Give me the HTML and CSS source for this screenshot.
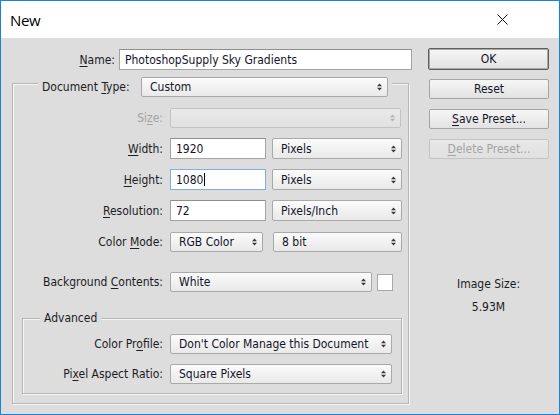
FILE: index.html
```html
<!DOCTYPE html>
<html>
<head>
<meta charset="utf-8">
<title>New</title>
<link rel="stylesheet" href="styles.css">
</head>
<body>
<div class="window">
  <header class="titlebar">
    <span class="title">New</span>
    <svg class="close" width="11" height="11" viewBox="0 0 11 11"><path d="M0.5 0.5L10.5 10.5M10.5 0.5L0.5 10.5" stroke="#111" stroke-width="1" fill="none"/></svg>
  </header>
  <div class="content">
    <div class="main">
      <div class="name-row">
        <span class="lbl name-lbl"><u>N</u>ame:</span>
        <div class="field name-field">PhotoshopSupply Sky Gradients</div>
      </div>
      <div class="group outer">
        <div class="group-head doc-head">
          <span class="lbl doc-lbl">Document <u>T</u>ype:</span>
          <div class="select doc-select"><span>Custom</span><svg class="arr" width="5" height="8" viewBox="0 0 5 8"><path d="M0 3.2L2.5 0.5L5 3.2ZM0 4.8L2.5 7.5L5 4.8Z"/></svg></div>
        </div>
        <div class="row row-size">
          <span class="lbl col-lbl disabled">Si<u>z</u>e:</span>
          <div class="select disabled w-size"><span></span><svg class="arr" width="5" height="8" viewBox="0 0 5 8"><path d="M0 3.2L2.5 0.5L5 3.2ZM0 4.8L2.5 7.5L5 4.8Z"/></svg></div>
        </div>
        <div class="row row-dim first-dim">
          <span class="lbl col-lbl"><u>W</u>idth:</span>
          <div class="field w-num">1920</div>
          <div class="select w-unit"><span>Pixels</span><svg class="arr" width="5" height="8" viewBox="0 0 5 8"><path d="M0 3.2L2.5 0.5L5 3.2ZM0 4.8L2.5 7.5L5 4.8Z"/></svg></div>
        </div>
        <div class="row row-dim">
          <span class="lbl col-lbl"><u>H</u>eight:</span>
          <div class="field w-num focus">1080<span class="caret"></span></div>
          <div class="select w-unit"><span>Pixels</span><svg class="arr" width="5" height="8" viewBox="0 0 5 8"><path d="M0 3.2L2.5 0.5L5 3.2ZM0 4.8L2.5 7.5L5 4.8Z"/></svg></div>
        </div>
        <div class="row row-dim">
          <span class="lbl col-lbl"><u>R</u>esolution:</span>
          <div class="field w-num">72</div>
          <div class="select w-unit"><span>Pixels/Inch</span><svg class="arr" width="5" height="8" viewBox="0 0 5 8"><path d="M0 3.2L2.5 0.5L5 3.2ZM0 4.8L2.5 7.5L5 4.8Z"/></svg></div>
        </div>
        <div class="row row-dim">
          <span class="lbl col-lbl">Color <u>M</u>ode:</span>
          <div class="select w-mode"><span>RGB Color</span><svg class="arr" width="5" height="8" viewBox="0 0 5 8"><path d="M0 3.2L2.5 0.5L5 3.2ZM0 4.8L2.5 7.5L5 4.8Z"/></svg></div>
          <div class="select w-bit"><span>8 bit</span><svg class="arr" width="5" height="8" viewBox="0 0 5 8"><path d="M0 3.2L2.5 0.5L5 3.2ZM0 4.8L2.5 7.5L5 4.8Z"/></svg></div>
        </div>
        <div class="row row-bg">
          <span class="lbl col-lbl">Background <u>C</u>ontents:</span>
          <div class="select w-bg"><span>White</span><svg class="arr" width="5" height="8" viewBox="0 0 5 8"><path d="M0 3.2L2.5 0.5L5 3.2ZM0 4.8L2.5 7.5L5 4.8Z"/></svg></div>
          <div class="swatch"></div>
        </div>
        <div class="group adv">
          <div class="group-head adv-head">Advanced</div>
          <div class="row row-cp">
            <span class="lbl adv-lbl">Color Pr<u>o</u>file:</span>
            <div class="select w-cp"><span>Don't Color Manage this Document</span><svg class="arr" width="5" height="8" viewBox="0 0 5 8"><path d="M0 3.2L2.5 0.5L5 3.2ZM0 4.8L2.5 7.5L5 4.8Z"/></svg></div>
          </div>
          <div class="row row-par">
            <span class="lbl adv-lbl">Pi<u>x</u>el Aspect Ratio:</span>
            <div class="select w-cp"><span>Square Pixels</span><svg class="arr" width="5" height="8" viewBox="0 0 5 8"><path d="M0 3.2L2.5 0.5L5 3.2ZM0 4.8L2.5 7.5L5 4.8Z"/></svg></div>
          </div>
        </div>
      </div>
    </div>
    <div class="side">
      <div class="btn btn-default">OK</div>
      <div class="btn btn-reset">Reset</div>
      <div class="btn"><span><u>S</u>ave Preset...</span></div>
      <div class="btn btn-disabled"><span><u>D</u>elete Preset...</span></div>
      <div class="img-size">
        <div class="img-lbl">Image Size:</div>
        <div class="img-val">5.93M</div>
      </div>
    </div>
  </div>
</div>
</body>
</html>
```

FILE: styles.css
```css
* { box-sizing: border-box; margin: 0; padding: 0; }
html, body { width: 560px; height: 415px; overflow: hidden; background: #fff; }
body {
  font-family: "DejaVu Sans Condensed", "DejaVu Sans", sans-serif;
  font-size: 12px;
  color: #1c1c24;
}
u { text-decoration: underline; text-underline-offset: 2px; text-decoration-thickness: 1px; }

.window {
  width: 560px;
  height: 415px;
  border: 1px solid #1883d7;
  display: flex;
  flex-direction: column;
  background: #dddddd;
}
.titlebar {
  height: 37px;
  flex: none;
  background: #fff;
  display: flex;
  align-items: center;
  padding-left: 9px;
}
.title {
  font-family: "Open Sans", "Noto Sans", sans-serif;
  font-size: 15px;
  letter-spacing: -0.4px;
  color: #000;
  margin-top: 1px;
}
.close { margin-left: auto; margin-right: 51px; }

.content {
  flex: 1;
  display: flex;
  padding: 10px 10px 0 11px;
}
.main { width: 400px; display: flex; flex-direction: column; }
.side { width: 121px; margin-left: 16px; display: flex; flex-direction: column; }

.lbl { white-space: nowrap; }
.lbl.disabled { color: #a3a3a3; }

.name-row { display: flex; align-items: center; height: 21px; margin-top: 1px; }
.name-lbl { width: 103px; text-align: right; margin-right: 4px; }
.name-field { width: 293px; }

.field {
  height: 21px;
  background: #fff;
  border: 1px solid #a4a4a4;
  border-top-color: #8e8e8e;
  display: flex;
  align-items: center;
  padding-left: 5px;
  color: #14142a;
}
.field.focus { border-color: #7eaee3; }
.caret { width: 1px; height: 13px; background: #000; margin-left: 1px; }

.select {
  height: 20px;
  border: 1px solid #a9a9a9;
  border-radius: 2px;
  background: linear-gradient(#fbfbfb, #e9e9e9);
  display: flex;
  align-items: center;
  padding: 0 5px 0 8px;
  color: #14142a;
  white-space: nowrap;
}
.select .arr { margin-left: auto; fill: #3a3a3a; flex: none; }
.select.disabled { background: linear-gradient(#e9e9e9, #e1e1e1); border-color: #c3c3c3; }
.select.disabled .arr { fill: #b3b3b3; }

.group {
  border: 1px solid #b6b6b6;
  box-shadow: inset 1px 1px 0 #f6f6f6, 1px 1px 0 #f6f6f6;
  display: flex;
  flex-direction: column;
}
.group-head {
  align-self: flex-start;
  display: flex;
  align-items: center;
  background: #dddddd;
  padding: 0 4px;
}
.outer { width: 397px; margin-top: 13px; padding-bottom: 0; }
.doc-head { margin-top: -7px; margin-left: 25px; height: 20px; }
.doc-lbl { width: 92px; }
.doc-select { width: 247px; margin-left: 7px; }

.row { display: flex; align-items: center; }
.col-lbl { width: 150px; text-align: right; margin-right: 7px; }
.adv-lbl { width: 140px; text-align: right; margin-right: 7px; }

.row-size { margin-top: 11px; height: 20px; }
.w-size { width: 231px; }
.row-dim { margin-top: 10px; height: 21px; }
.row-dim .select { height: 21px; }
.w-num { width: 96px; }
.w-unit { width: 130px; margin-left: 6px; }
.row-dim .w-mode, .row-dim .w-bit { height: 20px; }
.w-mode { width: 93px; }
.w-bit { width: 129px; margin-left: 10px; }

.row-bg { margin-top: 20px; height: 20px; }
.w-bg { width: 202px; }
.swatch { width: 16px; height: 17px; margin-left: 5px; background: #fff; border: 1px solid #a8a8a8; }

.adv { width: 380px; margin-left: 9px; margin-top: 26px; margin-bottom: 9px; padding-bottom: 9px; }
.adv-head { margin-top: -8px; margin-left: 17px; height: 14px; }
.row-cp { margin-top: 9px; height: 20px; }
.row-par { margin-top: 10px; height: 20px; }
.w-cp { width: 222px; }

.btn {
  height: 20px;
  border: 1px solid #a4a4a4;
  border-radius: 2px;
  background: linear-gradient(#f6f6f6, #e2e2e2);
  display: flex;
  align-items: center;
  justify-content: center;
  color: #14142a;
  margin-left: 1px;
  margin-top: 10px;
}
.btn-default {
  height: 22px;
  margin-left: 0;
  margin-top: 0;
  border-color: #5e5e5e;
  box-shadow: inset 0 0 0 1px #a9a9a9;
}
.btn-reset { margin-top: 9px; }
.btn-disabled { color: #a3a3a3; border-color: #c4c4c4; background: linear-gradient(#e8e8e8, #e0e0e0); }

.img-size { margin-top: 118px; display: flex; flex-direction: column; align-items: center; color: #1c1c24; }
.img-lbl { line-height: 15px; }
.img-val { line-height: 15px; margin-top: 8px; }
```
